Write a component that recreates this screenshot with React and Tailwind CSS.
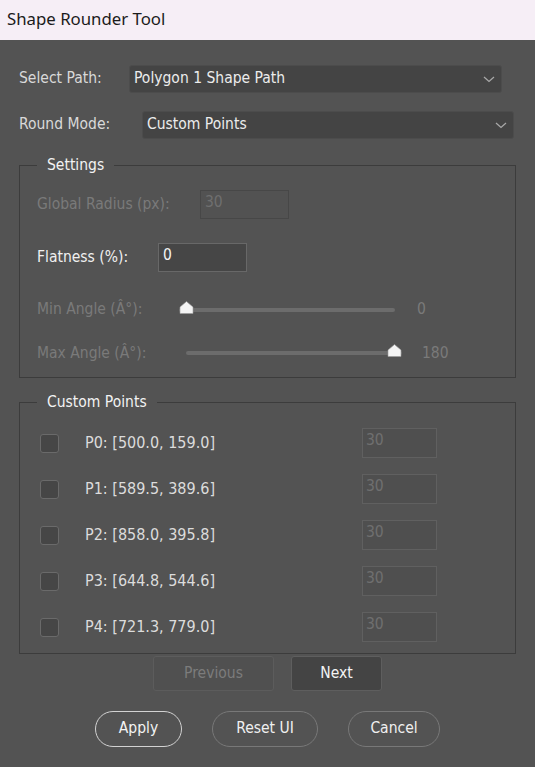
import React from 'react';

const ui = {
  fontFamily: '"DejaVu Sans Condensed", "DejaVu Sans", sans-serif',
  fontStretch: 'condensed'
};

function Chevron() {
  return (
    <svg width="12" height="7" viewBox="0 0 12 7" className="shrink-0">
      <path d="M1 1 L6 5.5 L11 1" fill="none" stroke="#a8a8a8" strokeWidth="1.3" />
    </svg>
  );
}

function Dropdown({ value, width }) {
  return (
    <div
      className="h-[28px] flex items-center justify-between rounded-[3px] border border-[#4c4c4c] bg-[#444444] pl-[4px] pr-[6px] text-[#ececec]"
      style={{ width }}
    >
      <span>{value}</span>
      <Chevron />
    </div>
  );
}

function Thumb() {
  return (
    <svg width="15" height="13" viewBox="0 0 15 13" className="block">
      <polygon points="7.5,0.5 14,6 14,12.5 1,12.5 1,6" fill="#f4f4f4" stroke="#9a9a9a" strokeWidth="0.6" />
    </svg>
  );
}

function Slider({ position }) {
  return (
    <div className="relative w-[216px] h-[12px] flex items-center">
      <div className="w-full h-[4px] rounded-full bg-[#6c6c6c]" />
      <div className={`absolute top-[-3px] ${position === 'start' ? 'left-0' : 'right-0'}`}>
        <Thumb />
      </div>
    </div>
  );
}

function PointRow({ label }) {
  return (
    <div className="flex items-center h-[30px]">
      <div className="w-[19px] h-[19px] rounded-[3px] border border-[#6a6a6a] bg-[#464646]" />
      <span className="ml-[26px] w-[277px] text-[16px] text-[#dcdcdc]">{label}</span>
      <div className="w-[75px] h-[30px] border border-[#606060] bg-[#4f4f4f] pl-[3px] leading-[22px] text-[#6f6f6f]">
        30
      </div>
    </div>
  );
}

const points = [
  'P0: [500.0, 159.0]',
  'P1: [589.5, 389.6]',
  'P2: [858.0, 395.8]',
  'P3: [644.8, 544.6]',
  'P4: [721.3, 779.0]'
];

export default function App() {
  return (
    <div className="w-[535px] h-[767px] bg-[#535353] text-[15.5px] overflow-hidden" style={ui}>
      <div
        className="h-[40px] bg-[#f6eef6] flex items-center pl-[7px] pb-[3px] text-[16.8px] text-[#1b1b1b]"
        style={{ fontFamily: '"Noto Sans", "Open Sans", sans-serif' }}
      >
        Shape Rounder Tool
      </div>

      <div className="px-[19px] pt-[25px]">
        <div className="flex items-center">
          <span className="w-[110px] text-[#d9d9d9]">Select Path:</span>
          <Dropdown value="Polygon 1 Shape Path" width={373} />
        </div>
        <div className="flex items-center mt-[18px]">
          <span className="w-[123px] text-[#d9d9d9]">Round Mode:</span>
          <Dropdown value="Custom Points" width={372} />
        </div>

        <fieldset className="mt-[15px] border border-[#3c3c3c] pl-[17px] pb-[12px]">
          <legend className="px-[10px] text-[#f2f2f2]">Settings</legend>
          <div className="flex items-center mt-[13px]">
            <span className="w-[163px] text-[#7a7a7a]">Global Radius (px):</span>
            <div className="w-[89px] h-[29px] border border-[#474747] bg-[#525252] pl-[4px] leading-[22px] text-[#6f6f6f]">
              30
            </div>
          </div>
          <div className="flex items-center mt-[24px]">
            <span className="w-[121px] text-[#f0f0f0]">Flatness (%):</span>
            <div className="w-[89px] h-[29px] border border-[#686868] bg-[#464646] pl-[4px] leading-[22px] text-[#f4f4f4]">
              0
            </div>
          </div>
          <div className="flex items-center mt-[26px]">
            <span className="w-[142px] text-[#7a7a7a]">Min Angle (Â°):</span>
            <Slider position="start" />
            <span className="ml-[22px] text-[#7a7a7a]">0</span>
          </div>
          <div className="flex items-center mt-[20px]">
            <span className="w-[149px] text-[#7a7a7a]">Max Angle (Â°):</span>
            <Slider position="end" />
            <span className="ml-[20px] text-[#7a7a7a]">180</span>
          </div>
        </fieldset>

        <fieldset className="mt-[13px] border border-[#3c3c3c] pl-[20px] pb-[11px]">
          <legend className="ml-[-3px] px-[10px] text-[#f2f2f2]">Custom Points</legend>
          <div className="flex flex-col gap-[16px] mt-[14px]">
            {points.map((p) => (
              <PointRow key={p} label={p} />
            ))}
          </div>
        </fieldset>

        <div className="flex justify-center gap-[17px] mt-[2px]">
          <button className="w-[121px] h-[35px] rounded-[3px] border border-[#5c5c5c] bg-[#505050] text-[#7c7c7c]">
            Previous
          </button>
          <button className="w-[91px] h-[35px] rounded-[3px] border border-[#5e5e5e] bg-[#444444] text-[#f4f4f4]">
            Next
          </button>
        </div>

        <div className="flex justify-center gap-[30px] mt-[20px]">
          <button className="w-[87px] h-[36px] rounded-full border-[1.5px] border-[#d2d2d2] text-[#f4f4f4]">
            Apply
          </button>
          <button className="w-[106px] h-[36px] rounded-full border border-[#787878] text-[#f0f0f0]">
            Reset UI
          </button>
          <button className="w-[92px] h-[36px] rounded-full border border-[#787878] text-[#f0f0f0]">
            Cancel
          </button>
        </div>
      </div>
    </div>
  );
}
